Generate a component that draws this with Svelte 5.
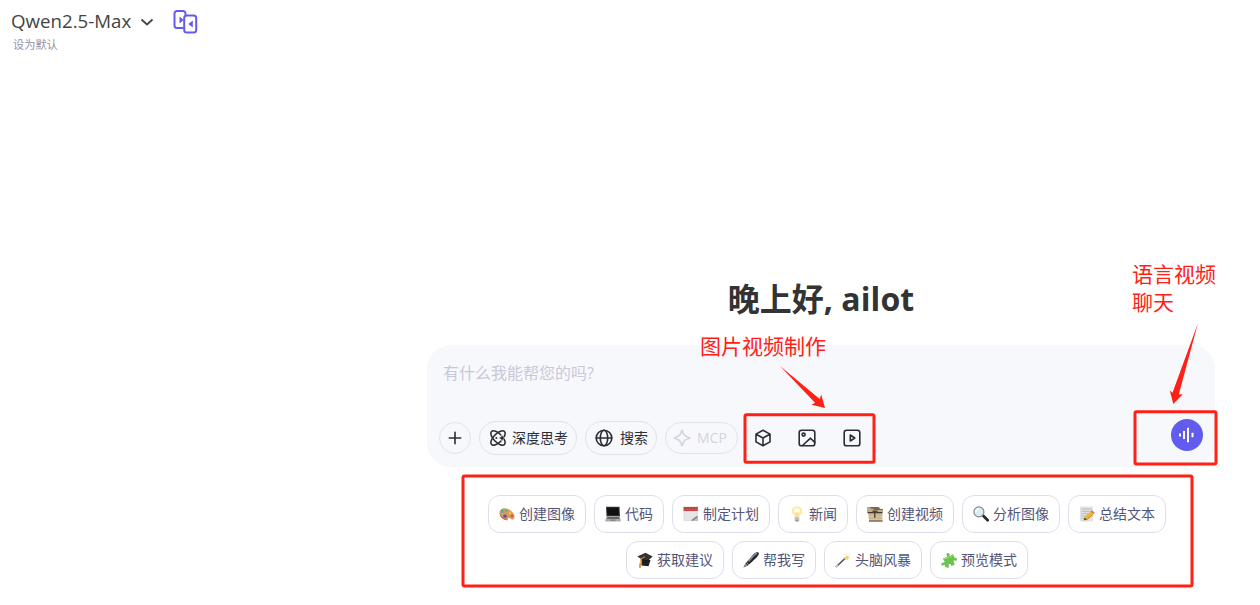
<script lang="ts">
	type Prompt = { icon: string; label: string };

	const rows: Prompt[][] = [
		[
			{ icon: 'palette', label: '创建图像' },
			{ icon: 'laptop', label: '代码' },
			{ icon: 'calendar', label: '制定计划' },
			{ icon: 'bulb', label: '新闻' },
			{ icon: 'film', label: '创建视频' },
			{ icon: 'search', label: '分析图像' },
			{ icon: 'memo', label: '总结文本' }
		],
		[
			{ icon: 'cap', label: '获取建议' },
			{ icon: 'pen', label: '帮我写' },
			{ icon: 'wand', label: '头脑风暴' },
			{ icon: 'puzzle', label: '预览模式' }
		]
	];
</script>

<div class="page">
	<header>
		<div class="model">
			<span class="model-name">Qwen2.5-Max</span>
			<svg class="chevron" width="14" height="14" viewBox="0 0 14 14"><path d="M1.5 4.5 7 9.5l5.5-5" /></svg>
			<svg class="compare" width="26" height="24" viewBox="0 0 26 24">
				<path d="M10.5 18H4a2.5 2.5 0 0 1-2.5-2.5v-12A2.5 2.5 0 0 1 4 1h6a2.5 2.5 0 0 1 2.5 2.500V5.500" />
				<rect x="11.200" y="5.600" width="12" height="16.800" rx="2.500" />
				<path class="fill" d="m6.500 6.500 4.200 3.500-4.200 3.500zM19.800 10.500v7l-4.500-3.500z" />
			</svg>
		</div>
		<div class="default">设为默认</div>
	</header>

	<main>
		<h1>晚上好<span>, ailot</span></h1>

		<section class="composer">
			<div class="placeholder">有什么我能帮您的吗?</div>
			<div class="toolbar">
				<button class="round" aria-label="添加">
					<svg width="14" height="14" viewBox="0 0 14 14"><path d="M7 1.3v11.4M1.3 7h11.4" /></svg>
				</button>
				<button class="pill think">
					<svg width="18" height="18" viewBox="0 0 18 18">
						<ellipse cx="9" cy="9" rx="9.200" ry="4.300" transform="rotate(45 9 9)" />
						<ellipse cx="9" cy="9" rx="9.200" ry="4.300" transform="rotate(-45 9 9)" />
						<path class="spark" d="m13 6 .9 2.100 2.100.9-2.100.9L13 12l-.9-2.100L10 9l2.100-.9z" />
						<circle cx="7.300" cy="9" r="1" fill="currentColor" stroke="none" />
					</svg>
					<span>深度思考</span>
				</button>
				<button class="pill find">
					<svg width="18" height="18" viewBox="0 0 18 18">
						<circle cx="9" cy="9" r="7.800" /><ellipse cx="9" cy="9" rx="3.700" ry="7.800" /><path d="M1.200 9h15.600" />
					</svg>
					<span>搜索</span>
				</button>
				<button class="pill mcp">
					<svg width="18" height="18" viewBox="0 0 18 18"><path d="M9 1.300c.7 0 .9 3.300 2.200 4.800S16.700 8.200 16.700 9s-4.200 1.400-5.500 2.900S9.700 16.700 9 16.700s-.9-3.300-2.200-4.800S1.300 9.800 1.300 9s4.200-1.400 5.500-2.900S8.300 1.300 9 1.300z" /></svg>
					<span>MCP</span>
				</button>
				<div class="tools">
					<svg width="18" height="18" viewBox="0 0 18 18"><path d="m9 1.200 7 3.900v7.800l-7 3.900-7-3.900V5.100zM2.200 5.300 9 9l6.800-3.700M9 9v7.500" /></svg>
					<svg width="18" height="18" viewBox="0 0 18 18"><rect x="1.200" y="1.200" width="15.600" height="15.600" rx="2.400" /><circle cx="5.600" cy="5.600" r="1.500" /><path d="m4.500 16.500 8-7.300 4.200 4.200" /></svg>
					<svg width="18" height="18" viewBox="0 0 18 18"><rect x="1.200" y="1.200" width="15.600" height="15.600" rx="2.400" /><path d="M7.300 6v6l4.500-3z" /></svg>
				</div>
				<button class="voice" aria-label="语音">
					<svg width="18" height="18" viewBox="0 0 18 18"><path d="M2 7.500v3M6 5v8M10 1.800v14.400M14.500 6.800v4.400" /></svg>
				</button>
			</div>
		</section>

		<section class="prompts">
			{#each rows as row}
				<div class="prompt-row">
					{#each row as prompt}
						<button class="prompt">
							<svg width="16" height="16" viewBox="0 0 16 16">
								{#if prompt.icon === 'palette'}
									<path d="M.5 6C1 2.500 5 1.200 9 3c4.500 2 7.500 6 6.300 9-.9 2.200-3 1.700-4 .4-1-1.200-2.300-.6-2.300.6 0 1.400-1.500 1.600-3.500.5C2 11.800 0 9 .5 6z" fill="#d39a60" />
									<path d="M1 8c1 3 4 5 7 6-1 .5-3-.3-5-2C1.500 10.700.8 9 1 8z" fill="#9a5a2d" />
									<circle cx="3.300" cy="5.300" r="1.500" fill="#35b5d0" /><circle cx="7.200" cy="4.500" r="1.500" fill="#63bd4b" />
									<circle cx="11" cy="7" r="1.500" fill="#f3bd36" /><circle cx="13" cy="10" r="1.300" fill="#e55137" />
									<circle cx="6" cy="10.300" r="1.700" fill="#7841b5" />
								{:else if prompt.icon === 'laptop'}
									<path d="M1 .8h13.500l.5 9.700H1.500z" fill="#343638" /><path d="M2 1.800h11.600l.3 7.500H2.500z" fill="#101113" />
									<path d="M1.500 10.500H15l.8 4.200-.5.900H.7l-.4-.9z" fill="#aaa9a9" /><path d="M2.500 11h11.500l.3 2H2.100z" fill="#64666a" /><path d="M6 13.500h4l.5 1.500h-5z" fill="#858587" />
								{:else if prompt.icon === 'calendar'}
									<path d="M.5 1h14.300v14H.5z" fill="#dedede" /><path d="M.5 1h14.300v4H.5z" fill="#c84b49" />
									<path d="M2 .5v2M5 .5v2M8 .5v2M11 .5v2M14 .5v2" stroke="#774440" stroke-width=".7" />
									<path d="M2 7h11M2 9h11M2 11h8M2 13h6" stroke="#f7f7f7" stroke-width=".7" />
									<path d="M8 15c1-2.500 3-2.500 3.500-4l3.500-1v5z" fill="#bdbdbd" /><path d="m9 14.500 5.500-4" stroke="#636363" />
								{:else if prompt.icon === 'bulb'}
									<path d="M8 .5c6 0 6.200 6 3.500 8.200C10.500 9.500 10.300 11 10.300 12H5.700c0-1-.2-2.500-1.200-3.300C1.800 6.500 2 .5 8 .5z" fill="#fae8a1" />
									<path d="M8 2c4 0 4 4 2.200 5.700L8.700 11H7.300L5.800 7.700C4 6 4 2 8 2z" fill="#fffad9" />
									<path d="M6 6.500 7.300 8 8 6.500l.8 1.500L10 6.500M7.300 8v3M8.700 8v3" fill="none" stroke="#e9bf55" stroke-width=".6" />
									<path d="M5.800 11.500h4.400v3L9 15.800H7l-1.200-1.300z" fill="#a4a5ac" /><path d="M5.800 13h4.400" stroke="#dedee2" stroke-width=".8" />
								{:else if prompt.icon === 'film'}
									<path d="M.5 1h11l2 2H16v3H.5z" fill="#74695b" /><path d="M.5 1.200H3l1 1.500h2l1 1.200h9V6H.5z" fill="#c3ae83" />
									<path d="M1 6.500h14.500v9H2z" fill="#d6c49d" /><path d="M.5 6h15v1.300H.5z" fill="#40372e" />
									<path d="M5.500 4.500h5v2h-5zM7 6h1.500v6H7z" fill="#514638" /><path d="M2 9h4.500M9.500 9H15M2 12h13" stroke="#b8a47c" stroke-width=".8" /><path d="M2 15h13.500" stroke="#62594a" stroke-width="1.200" />
								{:else if prompt.icon === 'search'}
									<path d="m9.500 9 5.200 5.200" stroke="#2b2b2e" stroke-width="2.800" stroke-linecap="round" />
									<circle cx="5.900" cy="5.900" r="5" fill="#dbedf3" stroke="#85888c" stroke-width="1.200" /><path d="M3 6c0-2 1-3 3-3" fill="none" stroke="#fff" stroke-width="1.300" />
								{:else if prompt.icon === 'memo'}
									<path d="M1 .5h13v15H1z" fill="#e0e2e4" /><path d="M2.500 3h10M2.500 5.300h10M2.500 7.600h8M2.500 10h5M2.500 12.300h4" stroke="#a9acb0" stroke-width=".7" />
									<path d="m5 13.500 1.200-3.500 5.600-4.700L14.800 8l-6.300 5.500z" fill="#f1b82d" /><path d="m11.500 5.500 1.500-1.200 2.800 2.500-1.500 1.300z" fill="#dc7770" /><path d="m4.500 14.500 1.200-3 2.300 2z" fill="#574b3b" /><path d="m7.500 14 6.500-5.500" stroke="#b17a26" stroke-width=".8" />
								{:else if prompt.icon === 'cap'}
									<path d="M4.500 7v6.500l7 .8 2-6.300z" fill="#1e1e1e" /><path d="M.3 4.500 8.500.8l7.200 3.600-6.500 5z" fill="#343434" /><path d="m.3 4.500 9 4.100 6.400-4.200-6.500 5.300z" fill="#111" />
									<path d="M8 4.700 3.700 7l-.5 5" fill="none" stroke="#e0a344" stroke-width=".9" /><path d="m2.500 11 1.700.2-.2 4.500H1.800z" fill="#d79b41" />
								{:else if prompt.icon === 'pen'}
									<path d="m.5 15.500 2-4L10.700 2C12.500.2 15 0 15.600.7c.7.8-.2 2.800-2 4.700L5 13.500z" fill="#24282b" /><path d="M5.500 9.500 11 3.200c1-.9 2-1.500 3-1.700" fill="none" stroke="#91999e" stroke-width="1.300" /><path d="m.5 15.500 2-4L5 13.500z" fill="#899197" /><path d="m3.500 10.500 2.300 2.200" stroke="#afbac0" />
								{:else if prompt.icon === 'wand'}
									<path d="M1 15 11 5.500" stroke="#56524d" stroke-width="1.700" /><path d="m1 15 2-2M9.500 7 11 5.500" stroke="#c4bfb6" stroke-width="1.800" />
									<path d="m11.500 2 .8 2 2-.8-1 1.900 2 1-2.200.4.2 2.200L12 7.200l-1.700 1.200.5-2L9 5.500l2-.4z" fill="#f1d576" /><circle cx="14.500" cy="1.500" r=".8" fill="#f7e4a2" /><circle cx="9" cy="2.500" r=".6" fill="#f7e4a2" />
								{:else}
									<g transform="translate(0 .5)">
										<path d="M6 3.500c-1.800-3 1.500-4 2.400-2.200.5 1-.2 2 .6 2.200.7.2 1.500-1.400 2.800-2l1.500 2.600c-.5 1.200.2 1.300 1.200 1.200 2-.2 1.900 3.200 0 3-1-.1-2-.6-1.900.5l1.100 3.500-3.200 1.300c-.6-.5-.2-1.500-1-2-1.500-.8-2.400.7-1.600 2l-.4 1.800-3.200-.9c-1-.4.1-1.700-.7-2.100C2.500 12 1.800 14 .6 12.700-.5 11.300 1.200 9.800 2.500 10c1.200.2 1.300-.7.8-1.600L1.800 6 5 4.700c.8.2 1.300-.4 1-1.200z" fill="#6dc254" /><path d="m3 6.500 3-1 1-1.500c1 1 2 1.500 3 .2l2-1.700" fill="none" stroke="#a8df79" />
									</g>
								{/if}
							</svg>
							<span>{prompt.label}</span>
						</button>
					{/each}
				</div>
			{/each}
		</section>
	</main>

	<!-- Anmerkungen über der Oberfläche -->
	<svg class="marks" width="1260" height="605" viewBox="0 0 1260 605" aria-hidden="true">
		<rect x="745" y="414.800" width="129" height="47.500" rx="1.500" />
		<rect x="1135" y="411.800" width="81" height="52.200" rx="1.500" />
		<rect x="463" y="476" width="729" height="110" rx="1.500" />
		<path d="m780 366 39.700 33 1.500-4.500 3.800 13.500-13.500-3.200 3.500-2z" />
		<path d="m1198 323-19.200 71.500 4-.2-9.500 9.700-3.500-13.500 2.700 2.300z" />
	</svg>
	<div class="note media">图片视频制作</div>
	<div class="note talk">语言视频<br />聊天</div>
</div>

<style>
	:global(body) { margin:0; background:#fff; }

	.page {
		position:relative;
		width:1260px; height:605px;
		overflow:hidden;
		font-family: "Open Sans", "Noto Sans CJK SC", sans-serif;
		color:#2c2c36;
	}
	svg { display:block; flex:none; fill:none; }
	button {
		box-sizing:border-box;
		display:flex; align-items:center;
		margin:0; padding:0;
		border:1px solid #e2e2ee;
		background:transparent;
		color:inherit;
		font: inherit;
		white-space:nowrap;
	}
	/* Schrift sitzt sonst einen Pixel zu tief */
	.pill span, .prompt span { padding-bottom:2px; }

	header { height:274px; padding:7px 0 0 11px; box-sizing:border-box; }
	.model { display:flex; align-items:center; height:28px; }
	.model-name { width:120px; font-size:18.7px; line-height:28px; white-space:nowrap; color:#444; }
	.chevron { margin:2px 0 0 9px; stroke:#444; stroke-width:1.8; }
	.compare { margin:1px 0 0 19px; stroke:#615ced; stroke-width:2; }
	.compare .fill { fill:#615ced; stroke:none; }
	.default { margin:2px 0 0 2px; font-size:11.2px; line-height:16px; color:#8f91a8; }

	main { width:788px; margin-left:427px; }
	h1 {
		height:71px; margin:0;
		text-align:center;
		font-size:32px; line-height:50px; font-weight:700;
		color:#333;
	}
	h1 span { letter-spacing:.1px; }

	.composer {
		box-sizing:border-box;
		height:122px;
		padding:16px 12px 0;
		border-radius:24px;
		background:#f7f8fc;
	}
	.placeholder { height:60px; padding-left:4px; font-size:16px; line-height:24px; color:#c8c8da; }
	.toolbar { display:flex; align-items:center; gap:8px; height:34px; font-size:14px; }
	.toolbar svg { stroke:currentColor; stroke-width:1.6; stroke-linejoin:round; stroke-linecap:round; }
	.round { width:32px; height:32px; justify-content:center; border-radius:50%; }
	.pill { height:34px; padding-left:9px; gap:5px; border-radius:17px; }
	.think { width:98px; }
	.think .spark { fill:currentColor; stroke:#f7f8fc; stroke-width:1; paint-order:stroke; }
	.find { width:72px; gap:7px; }
	.mcp { width:73px; height:32px; padding-left:7px; gap:6px; color:#d2d3e0; }
	.tools { display:flex; width:98px; margin:-1px 0 0 8px; }
	.tools svg:nth-child(2) { margin-left:25.5px; }
	.tools svg:nth-child(3) { margin-left:27.5px; }
	.voice {
		width:32px; height:32px; justify-content:center;
		margin:-6px 0 0 auto;
		border:0; border-radius:50%;
		background:#615ced; color:#fff;
	}
	.toolbar .voice svg { stroke-width:2; stroke-linecap:butt; }

	.prompts { display:flex; flex-direction:column; gap:8px; margin:28px 0 0 12px; }
	.prompt-row { display:flex; justify-content:center; gap:8px; }
	.prompt {
		height:38px; padding:0 10px; gap:4px;
		border-color:#dddeed; border-radius:12px;
		font-size:14px; color:#535577;
	}

	.marks { position:absolute; top:0; left:0; pointer-events:none; }
	.marks rect { stroke:#ff2116; stroke-width:3; }
	.marks path { fill:#ff2116; }
	.note { position:absolute; font-size:21px; line-height:28px; color:#ff2116; white-space:nowrap; }
	.media { left:700px; top:332px; }
	.talk { left:1132px; top:260px; }
</style>
